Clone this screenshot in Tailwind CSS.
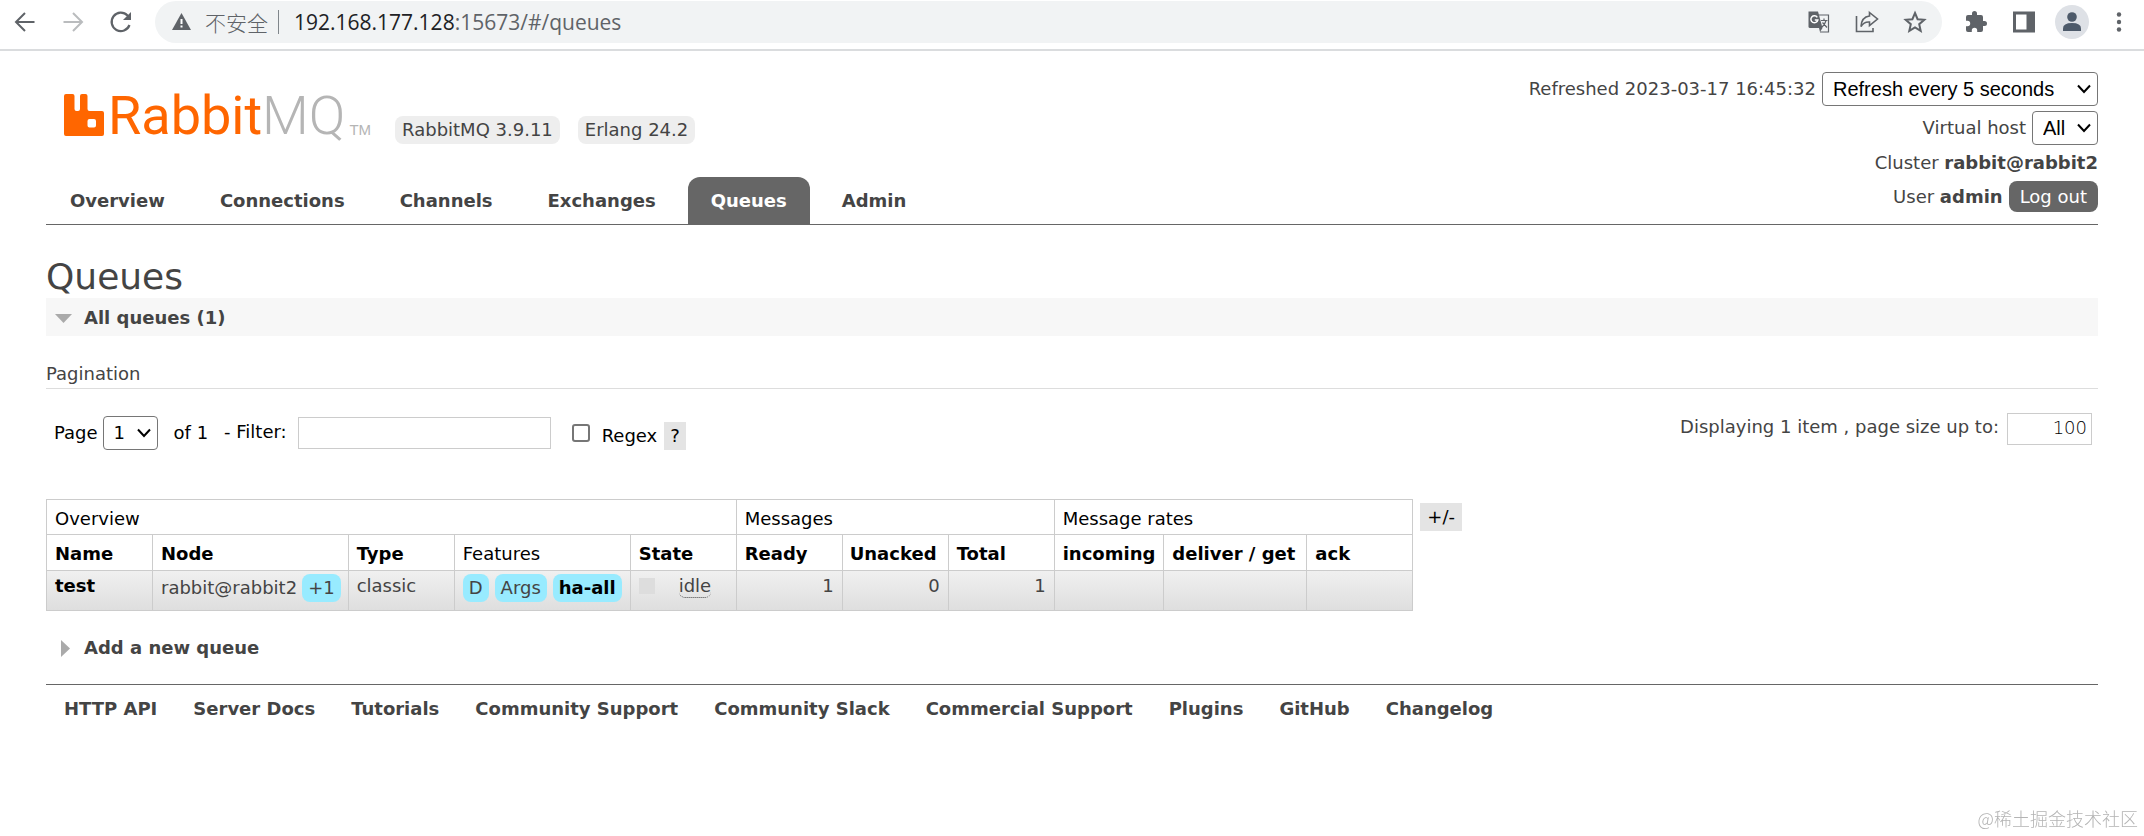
<!DOCTYPE html>
<html lang="en">

<head>
  <meta charset="UTF-8">
  <meta name="viewport" content="width=device-width, initial-scale=1.0">
  <title>RabbitMQ Management</title>
  <script src="https://cdn.jsdelivr.net/npm/@tailwindcss/browser@4"></script>
</head>

<body class="bg-white font-['DejaVu_Sans',sans-serif] text-lg/6 text-[#444]">

  <!-- Browser toolbar -->
  <div class="flex h-[51px] items-start border-b-2 border-[#dadcde] pt-px pr-[13px] text-[#5f6368]">
    <div class="flex h-[42px] items-center gap-6 pl-[13px]">
      <button aria-label="Back">
        <svg class="size-6" viewBox="0 0 24 24" fill="none" stroke="currentColor" stroke-width="2"><path d="M21.500 12H3.500M12 3L3 12L12 21"/></svg>
      </button>
      <button aria-label="Forward" class="text-[#babcbe]">
        <svg class="size-6" viewBox="0 0 24 24" fill="none" stroke="currentColor" stroke-width="2"><path d="M2.500 12H20.500M12 3L21 12L12 21"/></svg>
      </button>
      <button aria-label="Reload">
        <svg class="size-6" viewBox="0 0 24 24" fill="none" stroke="currentColor" stroke-width="2.200"><path d="M20.500 15A9.200 9.200 0 1 1 18.500 5.500L21 8"/><path d="M22 2V10H14Z" fill="currentColor" stroke="none"/></svg>
      </button>
    </div>

    <div class="ml-[22px] flex h-[42px] flex-1 items-center rounded-full bg-[#f1f3f4] pr-[15px] pl-[17px]">
      <svg class="h-[18px] w-[19px]" viewBox="0 0 19 18"><path d="M9.500 0L19 17H0Z" fill="#5f6368"/><path d="M9.500 6v5M9.500 12.500v2" stroke="#fff" stroke-width="2"/></svg>
      <span class="ml-[14px] font-['Noto_Sans_CJK_SC',sans-serif] text-[21px] font-light">不安全</span>
      <span class="ml-[10px] h-6 w-px bg-[#80868b]"></span>
      <span class="ml-[15px] flex-1 font-['Open_Sans',sans-serif] text-[21px]"><span class="text-[#202124]">192.168.177.128</span>:15673/#/queues</span>
      <div class="flex items-center gap-6">
        <button aria-label="Translate">
          <svg class="size-6" viewBox="0 0 24 24"><path d="M10 5h11.500v17H13" fill="none" stroke="currentColor" stroke-width="1.200"/><path d="M1.500 1.500h9.500L15.500 18H3a1.500 1.500 0 0 1-1.500-1.500Z" fill="currentColor"/><path d="M12 18h3.500L13 22Z" fill="currentColor"/><path d="M10.300 7.300A3.500 3.500 0 1 0 10.800 10H7.800" fill="none" stroke="#fff" stroke-width="1.500"/><path d="M14 10.500h6.500M17 8.500v2M19 10.500q-1 4-4 6.500M15.500 12.500l4.500 5" fill="none" stroke="currentColor" stroke-width="1.200"/></svg>
        </button>
        <button aria-label="Share">
          <svg class="size-6" viewBox="0 0 24 24" fill="none" stroke="currentColor" stroke-width="1.600"><path d="M1.500 6V21.500H18V18"/><path d="M14.500 2.500L22.500 9L14.500 15.500V12Q9 11.500 6 16.500Q6.500 7 14.500 6Z"/></svg>
        </button>
        <button aria-label="Bookmark">
          <svg class="size-6" viewBox="0 0 24 24" fill="none" stroke="currentColor" stroke-width="2"><path d="M12 3L14.600 9.200L21.300 9.800L16.200 14.200L17.700 20.800L12 17.300L6.300 20.800L7.800 14.200L2.700 9.800L9.400 9.200Z"/></svg>
        </button>
      </div>
    </div>

    <div class="ml-[22px] flex h-[42px] items-center">
      <button aria-label="Extensions">
        <svg class="size-6" viewBox="0 0 24 24" fill="currentColor"><path d="M20.500 11H19V7a2 2 0 0 0-2-2h-4V3.500a2.500 2.500 0 0 0-5 0V5H4a2 2 0 0 0-2 2v3.800h1.500a2.700 2.700 0 0 1 0 5.400H2V20a2 2 0 0 0 2 2h3.800v-1.500a2.700 2.700 0 0 1 5.400 0V22H17a2 2 0 0 0 2-2v-4h1.500a2.500 2.500 0 0 0 0-5z"/></svg>
      </button>
      <button aria-label="Side panel" class="ml-6">
        <svg class="size-6" viewBox="0 0 24 24"><path d="M1 1.500h22v21H1ZM4 4.500v15h10.500v-15Z" fill="currentColor" fill-rule="evenodd"/></svg>
      </button>
      <button aria-label="Profile" class="ml-[19px]">
        <svg class="size-[34px]" viewBox="0 0 34 34"><circle cx="17" cy="17" r="17" fill="#dee1e6"/><circle cx="17" cy="12" r="4.800" fill="#4d5a6a"/><path d="M8 26v-2.500q0-5.500 9-5.500t9 5.500V26Z" fill="#4d5a6a"/></svg>
      </button>
      <button aria-label="Menu" class="ml-[18px]">
        <svg class="size-6" viewBox="0 0 24 24" fill="currentColor"><circle cx="12" cy="4.500" r="2.200"/><circle cx="12" cy="12" r="2.200"/><circle cx="12" cy="19.500" r="2.200"/></svg>
      </button>
    </div>
  </div>

  <div class="mx-[46px]">
    <!-- Header -->
    <header class="flex items-stretch justify-between border-b border-[#666]">
      <div class="flex flex-col justify-between">
        <div class="flex items-end pt-[37px] pl-[18px]">
          <a href="#/" aria-label="RabbitMQ" class="flex items-end">
            <svg class="mb-[8px] h-[42px] w-10" viewBox="0 0 40 42"><path d="M2 0H8.500Q10.500 0 10.500 2V15Q10.500 17 12.500 17H14Q16 17 16 15V2Q16 0 18 0H21.500Q23.500 0 23.500 2V15Q23.500 17 25.500 17H38Q40 17 40 19V40Q40 42 38 42H2Q0 42 0 40V2Q0 0 2 0ZM25.500 25Q23.500 25 23.500 27V31.500Q23.500 33.500 25.500 33.500H30Q32 33.500 32 31.500V27Q32 25 30 25Z" fill="#f60" fill-rule="evenodd"/></svg>
            <span class="ml-1 font-['Roboto',sans-serif] text-[54px]/[56px] text-[#f60]">Rabbit<span class="font-light text-[#b5b5b5]">MQ</span></span>
            <span class="mb-[2px] ml-1 font-['Liberation_Sans',sans-serif] text-[15px] text-[#b5b5b5]">TM</span>
          </a>
          <span class="ml-6 rounded-lg bg-[#eee] px-[7px] py-[2px]">RabbitMQ 3.9.11</span>
          <span class="ml-[18px] rounded-lg bg-[#eee] px-[7px] py-[2px]">Erlang 24.2</span>
        </div>
        <nav class="flex gap-[9px] pl-px font-bold">
          <a href="#/" class="px-[23px] pt-3 pb-[11px]">Overview</a>
          <a href="#/connections" class="px-[23px] pt-3 pb-[11px]">Connections</a>
          <a href="#/channels" class="px-[23px] pt-3 pb-[11px]">Channels</a>
          <a href="#/exchanges" class="px-[23px] pt-3 pb-[11px]">Exchanges</a>
          <a href="#/queues" class="rounded-t-xl bg-[#666] px-[23px] pt-3 pb-[11px] text-white">Queues</a>
          <a href="#/users" class="px-[23px] pt-3 pb-[11px]">Admin</a>
        </nav>
      </div>

      <div class="flex flex-col items-end gap-[5px] pt-[21px] pb-3">
        <div class="flex items-center gap-[6px]">
          <label for="refresh">Refreshed 2023-03-17 16:45:32</label>
          <div class="relative">
            <select id="refresh" class="h-[34px] w-[276px] appearance-none rounded border border-[#767676] bg-white pl-[10px] font-['Liberation_Sans',sans-serif] text-xl/6 text-black">
              <option>Refresh every 5 seconds</option>
            </select>
            <svg class="pointer-events-none absolute top-[12px] right-[7px] h-[10px] w-[14px]" viewBox="0 0 14 10" fill="none" stroke="#000" stroke-width="2"><path d="M1 1.500L7 8L13 1.500"/></svg>
          </div>
        </div>
        <div class="flex items-center gap-[6px]">
          <label for="vhost">Virtual host</label>
          <div class="relative">
            <select id="vhost" class="h-[34px] w-[66px] appearance-none rounded border border-[#767676] bg-white pl-[10px] font-['Liberation_Sans',sans-serif] text-xl/6 text-black">
              <option>All</option>
            </select>
            <svg class="pointer-events-none absolute top-[12px] right-[7px] h-[10px] w-[14px]" viewBox="0 0 14 10" fill="none" stroke="#000" stroke-width="2"><path d="M1 1.500L7 8L13 1.500"/></svg>
          </div>
        </div>
        <p class="py-px">Cluster <b>rabbit@rabbit2</b></p>
        <div class="flex items-center gap-[6px]">
          <span>User <b>admin</b></span>
          <button class="h-[31px] rounded-lg bg-[#666] px-[11px] text-white">Log out</button>
        </div>
      </div>
    </header>

    <!-- Queues -->
    <h1 class="pt-[31px] text-4xl/[42px]">Queues</h1>
    <h2 class="flex items-center bg-[#f7f7f7] pt-2 pb-[6px] pl-[9px] font-bold">
      <svg class="mr-3 h-[9px] w-[17px]" viewBox="0 0 17 9"><path d="M0 0H17L8.500 9Z" fill="#aaa"/></svg>
      All queues (1)
    </h2>
    <h3 class="border-b border-[#ddd] pt-[26px] pb-[2px]">Pagination</h3>

    <div class="flex items-start justify-between pt-6 pr-[6px] pb-[49px]">
      <div class="flex items-center pt-[3px] pl-2 text-black">
        <label for="page">Page</label>
        <div class="relative ml-[5px]">
          <select id="page" class="block h-[34px] w-[55px] appearance-none rounded border border-[#767676] bg-white pl-[10px] text-lg/6 text-black">
            <option>1</option>
          </select>
          <svg class="pointer-events-none absolute top-[12px] right-[7px] h-[10px] w-[14px]" viewBox="0 0 14 10" fill="none" stroke="#000" stroke-width="2"><path d="M1 1.500L7 8L13 1.500"/></svg>
        </div>
        <span class="ml-4">of 1</span>
        <label for="filter" class="ml-4 pb-[2px]">- Filter:</label>
        <input id="filter" type="text" class="ml-[11px] h-8 w-[253px] border border-[#ccc] px-2">
        <input id="regex" type="checkbox" class="ml-[21px] size-[18px] appearance-none rounded-[3px] border-2 border-[#767676] bg-white">
        <label for="regex" class="ml-3 pt-[6px]">Regex</label>
        <button aria-label="Help" class="mt-[6px] ml-[7px] h-7 bg-[#e4e4e4] px-[6px]">?</button>
      </div>
      <div class="flex items-start gap-2">
        <label for="pagesize" class="pt-[2px]">Displaying 1 item , page size up to:</label>
        <input id="pagesize" type="text" value="100" class="h-8 w-[85px] border border-[#ccc] pr-1 pb-1 text-right font-extralight text-black">
      </div>
    </div>

    <div class="flex items-start">
      <table class="border-collapse text-left text-black">
        <thead>
          <tr class="h-[35px]">
            <th colspan="5" class="border border-[#ccc] px-2 pt-[3px] font-normal">Overview</th>
            <th colspan="3" class="border border-[#ccc] px-2 pt-[3px] font-normal">Messages</th>
            <th colspan="3" class="border border-[#ccc] px-2 pt-[3px] font-normal">Message rates</th>
          </tr>
          <tr class="h-9">
            <th class="min-w-[106px] border border-[#ccc] px-2 pt-[2px]">Name</th>
            <th class="border border-[#ccc] px-2 pt-[2px]">Node</th>
            <th class="min-w-[106px] border border-[#ccc] px-2 pt-[2px]">Type</th>
            <th class="border border-[#ccc] px-2 pt-[2px] font-normal">Features</th>
            <th class="min-w-[106px] border border-[#ccc] px-2 pt-[2px]">State</th>
            <th class="min-w-[106px] border border-[#ccc] px-2 pt-[2px]">Ready</th>
            <th class="min-w-[106px] border border-[#ccc] px-[7px] pt-[2px]">Unacked</th>
            <th class="min-w-[106px] border border-[#ccc] px-2 pt-[2px]">Total</th>
            <th class="border border-[#ccc] px-2 pt-[2px]">incoming</th>
            <th class="min-w-[143px] border border-[#ccc] px-2 pt-[2px]">deliver / get</th>
            <th class="min-w-[106px] border border-[#ccc] px-2 pt-[2px]">ack</th>
          </tr>
        </thead>
        <tbody>
          <tr class="h-10 bg-linear-to-b from-[#f0f0f0] to-[#dedede] align-top text-[#444]">
            <td class="border border-[#ccc] px-2 pt-[3px]"><a href="#/queues/test" class="font-bold text-black">test</a></td>
            <td class="border border-[#ccc] py-[3px] pr-[7px] pl-2">
              <div class="flex items-center gap-[5px]">rabbit@rabbit2 <span class="rounded-lg bg-[#98ebff] px-[6px] py-[2px]">+1</span></div>
            </td>
            <td class="border border-[#ccc] px-2 pt-[3px]">classic</td>
            <td class="border border-[#ccc] px-2 py-[3px]">
              <div class="flex items-center gap-[6px]">
                <span class="rounded-lg bg-[#98ebff] px-[6px] py-[2px]">D</span>
                <span class="rounded-lg bg-[#98ebff] px-[6px] py-[2px]">Args</span>
                <a href="#/policies" class="rounded-lg bg-[#98ebff] px-[6px] py-[2px] font-bold text-black">ha-all</a>
              </div>
            </td>
            <td class="border border-[#ccc] px-2 pt-[3px]">
              <div class="flex items-start">
                <span class="mt-1 mr-6 size-4 bg-[#ddd]"></span>
                <span class="mt-px rounded-md border-b border-dotted border-[#444] leading-[22px]">idle</span>
              </div>
            </td>
            <td class="border border-[#ccc] px-2 pt-[3px] text-right">1</td>
            <td class="border border-[#ccc] px-2 pt-[3px] text-right">0</td>
            <td class="border border-[#ccc] px-2 pt-[3px] text-right">1</td>
            <td class="border border-[#ccc]"></td>
            <td class="border border-[#ccc]"></td>
            <td class="border border-[#ccc]"></td>
          </tr>
        </tbody>
      </table>
      <button class="mt-1 ml-[7px] h-7 bg-[#e4e4e4] px-[7px] text-black">+/-</button>
    </div>

    <h2 class="flex items-center pt-[25px] pb-6 pl-[15px] font-bold">
      <svg class="mr-[14px] h-[17px] w-[9px]" viewBox="0 0 9 17"><path d="M0 0V17L9 8.500Z" fill="#aaa"/></svg>
      Add a new queue
    </h2>

    <!-- Footer -->
    <footer class="flex gap-9 border-t border-[#666] pt-3 pl-[18px] font-bold">
      <a href="#">HTTP API</a>
      <a href="#">Server Docs</a>
      <a href="#">Tutorials</a>
      <a href="#">Community Support</a>
      <a href="#">Community Slack</a>
      <a href="#">Commercial Support</a>
      <a href="#">Plugins</a>
      <a href="#">GitHub</a>
      <a href="#">Changelog</a>
    </footer>
  </div>

  <p class="fixed right-[6px] bottom-[6px] font-['Noto_Sans_CJK_SC',sans-serif] text-lg/6 font-light text-[#b4b4b4]">@稀土掘金技术社区</p>
</body>

</html>
